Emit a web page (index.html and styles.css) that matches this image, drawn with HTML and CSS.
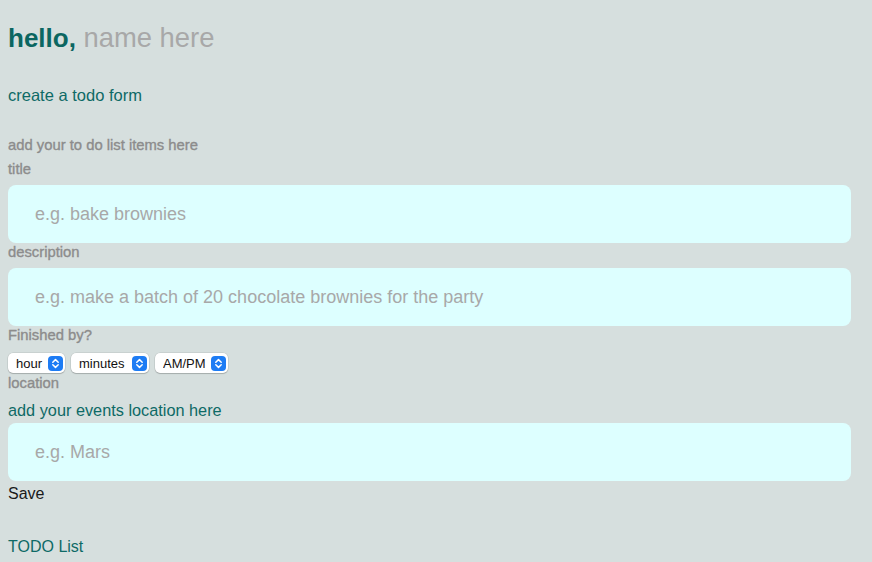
FILE: index.html
```html
<!DOCTYPE html>
<html lang="en">
<head>
<meta charset="utf-8">
<title>Todo</title>
<link rel="stylesheet" href="styles.css">
</head>
<body>
<main class="page">
  <h1 class="greeting"><span class="hello">hello,</span> <span class="name">name here</span></h1>
  <h2 class="section-title">create a todo form</h2>
  <form class="todo-form">
    <p class="label hint">add your to do list items here</p>
    <label class="label label-title" for="title">title</label>
    <input class="text-input input-title" id="title" type="text" placeholder="e.g. bake brownies">
    <label class="label label-tight" for="desc">description</label>
    <input class="text-input" id="desc" type="text" placeholder="e.g. make a batch of 20 chocolate brownies for the party">
    <p class="label label-tight">Finished by?</p>
    <div class="time-row">
      <div class="select sel-hour">
        <select><option>hour</option></select>
        <svg class="chev" width="15" height="15" viewBox="0 0 15 15"><rect width="15" height="15" rx="4" fill="#1d7cf4"/><path d="M4.8 6.2 7.5 3.6 10.2 6.2M4.8 8.8 7.5 11.4 10.2 8.8" fill="none" stroke="#fff" stroke-width="1.5" stroke-linecap="round" stroke-linejoin="round"/></svg>
      </div>
      <div class="select sel-min">
        <select><option>minutes</option></select>
        <svg class="chev" width="15" height="15" viewBox="0 0 15 15"><rect width="15" height="15" rx="4" fill="#1d7cf4"/><path d="M4.8 6.2 7.5 3.6 10.2 6.2M4.8 8.8 7.5 11.4 10.2 8.8" fill="none" stroke="#fff" stroke-width="1.5" stroke-linecap="round" stroke-linejoin="round"/></svg>
      </div>
      <div class="select sel-ampm">
        <select><option>AM/PM</option></select>
        <svg class="chev" width="15" height="15" viewBox="0 0 15 15"><rect width="15" height="15" rx="4" fill="#1d7cf4"/><path d="M4.8 6.2 7.5 3.6 10.2 6.2M4.8 8.8 7.5 11.4 10.2 8.8" fill="none" stroke="#fff" stroke-width="1.5" stroke-linecap="round" stroke-linejoin="round"/></svg>
      </div>
    </div>
    <label class="label label-loc" for="loc">location</label>
    <p class="loc-hint">add your events location here</p>
    <input class="text-input input-loc" id="loc" type="text" placeholder="e.g. Mars">
    <button class="save" type="button">Save</button>
  </form>
  <h2 class="section-title list-title">TODO List</h2>
</main>
</body>
</html>
```
FILE: styles.css
```css
html, body {
  margin: 0;
  background: #d6dfde;
}
body {
  font-family: "Liberation Sans", Arial, sans-serif;
  color: #1a1a1a;
}
.page {
  padding: 0 8px;
}
.greeting {
  margin: 23px 0 0;
  font-size: 27px;
  line-height: 30px;
  font-weight: normal;
}
.hello {
  font-size: 26px;
  font-weight: bold;
  color: #0b6661;
}
.name {
  font-size: 27.4px;
  color: #a8a8a8;
}
.section-title {
  margin: 32px 0 0;
  font-size: 16.5px;
  line-height: 20px;
  font-weight: normal;
  color: #0e6a66;
}
.todo-form {
  margin: 0 13px 0 0;
}
.label {
  display: block;
  margin: 0;
  font-size: 14.8px;
  line-height: 16px;
  font-weight: normal;
  color: #8c8c8c;
  -webkit-text-stroke: 0.35px #8c8c8c;
}
.hint {
  margin-top: 32px;
}
.label-title {
  margin-top: 8px;
}
.label-tight {
  margin-top: 1px;
}
.label-loc {
  margin-top: 2px;
}
.text-input {
  display: block;
  box-sizing: border-box;
  width: 100%;
  height: 58px;
  margin: 8px 0 0;
  padding: 1px 0 0 27px;
  border: none;
  border-radius: 8px;
  outline: none;
  background: #ddffff;
  font-family: "Liberation Sans", Arial, sans-serif;
  font-size: 18px;
  color: #333;
}
.text-input::placeholder {
  color: #a8a8a8;
}
.input-loc {
  margin-top: 4px;
}
.time-row {
  display: flex;
  gap: 6px;
  margin-top: 10px;
  height: 20px;
}
.select {
  display: flex;
  align-items: center;
  box-sizing: border-box;
  height: 20px;
  padding: 0 2px 0 8px;
  background: #fff;
  border-radius: 5px;
  box-shadow: 0 0 0 0.5px rgba(0, 0, 0, 0.12), 0 1px 1px rgba(0, 0, 0, 0.18);
}
.select select {
  flex: 1 1 auto;
  min-width: 0;
  appearance: none;
  -webkit-appearance: none;
  border: none;
  background: transparent;
  padding: 0;
  margin: 0;
  font-family: "Liberation Sans", Arial, sans-serif;
  font-size: 13px;
  color: #111;
  outline: none;
}
.chev {
  flex: 0 0 auto;
  display: block;
}
.sel-hour { width: 57px; }
.sel-min { width: 78px; }
.sel-ampm { width: 73px; }
.loc-hint {
  margin: 10px 0 0;
  font-size: 16.3px;
  line-height: 18px;
  color: #0e6a66;
}
.save {
  display: block;
  margin: 4px 0 0;
  padding: 0;
  border: none;
  background: none;
  font-family: "Liberation Sans", Arial, sans-serif;
  font-size: 16px;
  line-height: 18px;
  color: #1a1a1a;
}
.list-title {
  margin-top: 35px;
  line-height: 18px;
  font-size: 16px;
}
```
